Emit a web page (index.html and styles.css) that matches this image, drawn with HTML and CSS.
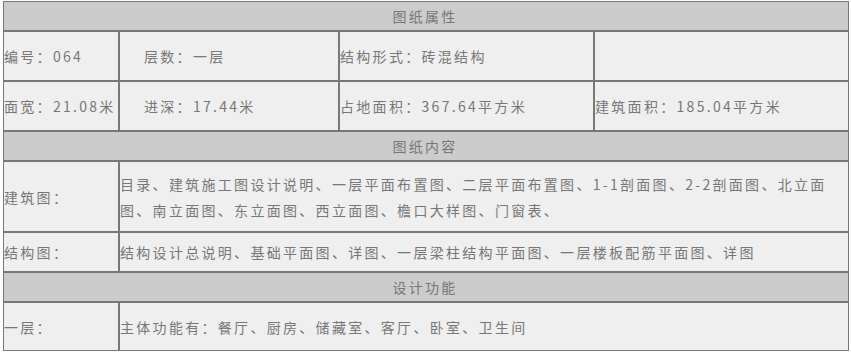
FILE: index.html
```html
<!DOCTYPE html>
<html lang="zh">
<head>
<meta charset="utf-8">
<link rel="stylesheet" href="styles.css">
</head>
<body>
<table class="attr">
  <colgroup>
    <col class="c1">
    <col class="c2">
    <col class="c3">
    <col class="c4">
  </colgroup>
  <tr class="h30"><td class="head" colspan="4">图纸属性</td></tr>
  <tr class="h50">
    <td>编号：064</td>
    <td class="indent">层数：一层</td>
    <td>结构形式：砖混结构</td>
    <td></td>
  </tr>
  <tr class="h50">
    <td>面宽：21.08米</td>
    <td class="indent">进深：17.44米</td>
    <td>占地面积：367.64平方米</td>
    <td>建筑面积：185.04平方米</td>
  </tr>
  <tr class="h30"><td class="head" colspan="4">图纸内容</td></tr>
  <tr class="h71">
    <td>建筑图：</td>
    <td colspan="3">目录、建筑施工图设计说明、一层平面布置图、二层平面布置图、1-1剖面图、2-2剖面图、北立面图、南立面图、东立面图、西立面图、檐口大样图、门窗表、</td>
  </tr>
  <tr class="h40">
    <td>结构图：</td>
    <td colspan="3">结构设计总说明、基础平面图、详图、一层梁柱结构平面图、一层楼板配筋平面图、详图</td>
  </tr>
  <tr class="h30"><td class="head" colspan="4">设计功能</td></tr>
  <tr class="h49">
    <td>一层：</td>
    <td colspan="3">主体功能有：餐厅、厨房、储藏室、客厅、卧室、卫生间</td>
  </tr>
</table>
</body>
</html>
```
FILE: styles.css
```css
html, body {
  margin: 0;
  padding: 0;
  background: #ffffff;
}

.attr {
  margin: 1px 0 0 3px;
  width: 846px;
  table-layout: fixed;
  border-collapse: separate;
  border-spacing: 0;
  font-family: "Noto Sans CJK SC", "Noto Sans", sans-serif;
  font-size: 14px;
  letter-spacing: 2.3px;
  line-height: 26px;
  color: #777777;
}

.c1 { width: 116px; }
.c2 { width: 220px; }
.c3 { width: 255px; }
.c4 { width: 255px; }

.attr td {
  border: 1px solid #787878;
  background: #efefef;
  padding: 0 2px 0 0;
  vertical-align: middle;
  text-align: left;
  box-sizing: border-box;
}

.attr td.head {
  background: #cccccc;
  text-align: center;
}

.attr td.indent {
  padding-left: 24px;
}

.h30 td { height: 30px; }
.h40 td { height: 40px; }
.h49 td { height: 49px; }
.h50 td { height: 50px; }
.h71 td { height: 71px; }
```
